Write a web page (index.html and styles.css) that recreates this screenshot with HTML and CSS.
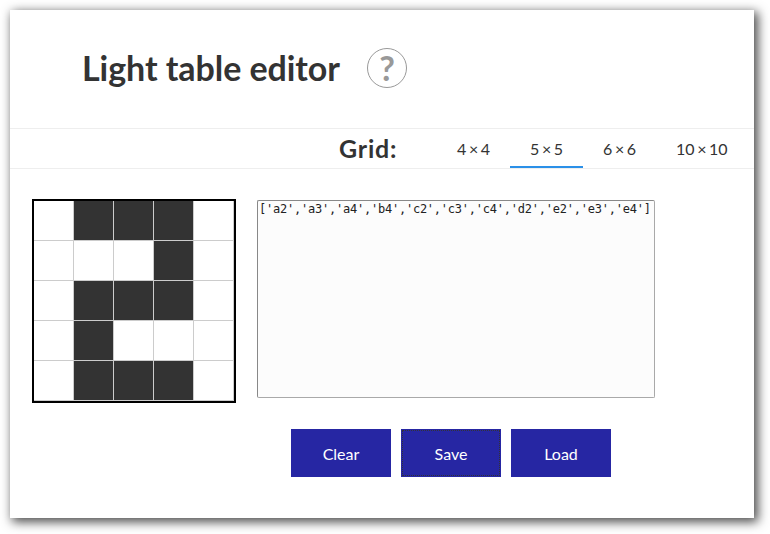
FILE: index.html
```html
<!DOCTYPE html>
<html lang="en">
<head>
<meta charset="utf-8">
<title>Light table editor</title>
<link rel="stylesheet" href="styles.css">
</head>
<body>
<main class="card">
  <header class="header">
    <h1 class="title">Light table editor</h1>
    <span class="help">?</span>
  </header>
  <nav class="tabs">
    <h2 class="tabs-label">Grid:</h2>
    <span class="tab">4 × 4</span>
    <span class="tab active">5 × 5</span>
    <span class="tab">6 × 6</span>
    <span class="tab">10 × 10</span>
  </nav>
  <section class="workspace">
    <div class="board">
      <i></i><i class="on"></i><i class="on"></i><i class="on"></i><i></i>
      <i></i><i></i><i></i><i class="on"></i><i></i>
      <i></i><i class="on"></i><i class="on"></i><i class="on"></i><i></i>
      <i></i><i class="on"></i><i></i><i></i><i></i>
      <i></i><i class="on"></i><i class="on"></i><i class="on"></i><i></i>
    </div>
    <div class="output">['a2','a3','a4','b4','c2','c3','c4','d2','e2','e3','e4']</div>
  </section>
  <div class="actions">
    <button class="button">Clear</button>
    <button class="button focused">Save</button>
    <button class="button">Load</button>
  </div>
</main>
</body>
</html>
```
FILE: styles.css
```css
* { box-sizing: border-box; }
body {
  min-height: 534px;
  margin: 0;
  padding: 10px;
  background: #fff;
  color: #333;
  font-family: Lato, sans-serif;
  font-size: 16px;
}
.card {
  width: 744px;
  height: 508px;
  background: #fff;
  box-shadow: 3px 3px 10px 1px rgba(0, 0, 0, 0.7);
}
.header {
  display: flex;
  align-items: center;
  height: 118px;
  padding: 0 0 2px 72px;
}
.title {
  width: 285px;
  margin: 0;
  font-size: 34px;
  line-height: 40px;
  font-weight: 700;
  letter-spacing: -0.06px;
  white-space: nowrap;
}
.help {
  width: 40px;
  height: 40px;
  border: 1px solid #999;
  border-radius: 50%;
  color: #999;
  font-size: 34px;
  font-weight: 700;
  line-height: 38px;
  text-align: center;
}
.tabs {
  display: flex;
  height: 41px;
  border-top: 1px solid #eee;
  border-bottom: 1px solid #eee;
}
.tabs-label {
  flex: none;
  width: 98px;
  margin: 0 0 0 329px;
  font-size: 25px;
  letter-spacing: 0.8px;
  line-height: 39px;
}
.tab {
  flex: none;
  width: 73px;
  height: 39px;
  padding-left: 20px;
  border-bottom: 2px solid transparent;
  line-height: 40px;
  word-spacing: -1.5px;
  white-space: nowrap;
}
.tab.active { border-color: #2b90e8; }
.workspace {
  display: flex;
  padding: 30px 22px 0;
  gap: 21px;
}
.board {
  display: grid;
  grid-template-columns: repeat(5, 40px);
  grid-auto-rows: 40px;
  width: 204px;
  height: 204px;
  border: 2px solid #000;
}
.board i {
  border-right: 1px solid #ccc;
  border-bottom: 1px solid #ccc;
}
.board .on { background: #333; }
.output {
  width: 398px;
  height: 198px;
  margin-top: 1px;
  padding: 1px;
  border: 1px solid #a9a9a9;
  border-top-color: #888;
  border-left-color: #888;
  border-radius: 2px;
  background: #fcfcfc;
  color: #222;
  font: 12px/14px "DejaVu Sans Mono", monospace;
  letter-spacing: -0.23px;
  white-space: nowrap;
}
.actions {
  display: flex;
  gap: 10px;
  padding: 26px 0 0 281px;
}
.button {
  width: 100px;
  height: 48px;
  padding: 1px 0 0;
  border: 0;
  background: #2626a3;
  color: #fff;
  font: 16px/20px Lato, sans-serif;
}
.focused {
  outline: 1px dotted #333;
  outline-offset: -2px;
}
```
